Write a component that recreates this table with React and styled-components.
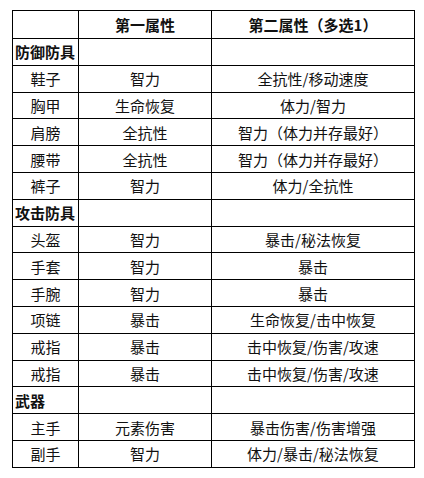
import React from "react"
import styled, { createGlobalStyle } from "styled-components"

const GlobalStyle = createGlobalStyle`
  html, body {
    margin: 0;
    padding: 0;
    background: #ffffff;
  }
  body {
    font-family: "Noto Sans CJK SC", "Liberation Serif", serif;
    color: #111111;
  }
`

const Page = styled.div`
  padding: 10px 0 0 12px;
`

const Table = styled.table`
  border-collapse: collapse;
  table-layout: fixed;
  width: 402px;
  font-size: 15px;
`

const Col = styled.col`
  width: ${(p) => p.$w}px;
`

const HeadCell = styled.th`
  border: 1px solid #000;
  height: 27px;
  padding: 0;
  font-weight: 700;
  text-align: center;
  vertical-align: middle;
  line-height: 1;
`

const Cell = styled.td`
  border: 1px solid #000;
  height: 25.8px;
  padding: ${(p) => (p.$section ? "0 0 0 2px" : "0")};
  font-weight: ${(p) => (p.$section ? 700 : 400)};
  text-align: ${(p) => (p.$section ? "left" : "center")};
  vertical-align: middle;
  line-height: 1;
  white-space: nowrap;
`

const rows = [
  { section: "防御防具" },
  { part: "鞋子", first: "智力", second: "全抗性/移动速度" },
  { part: "胸甲", first: "生命恢复", second: "体力/智力" },
  { part: "肩膀", first: "全抗性", second: "智力（体力并存最好）" },
  { part: "腰带", first: "全抗性", second: "智力（体力并存最好）" },
  { part: "裤子", first: "智力", second: "体力/全抗性" },
  { section: "攻击防具" },
  { part: "头盔", first: "智力", second: "暴击/秘法恢复" },
  { part: "手套", first: "智力", second: "暴击" },
  { part: "手腕", first: "智力", second: "暴击" },
  { part: "项链", first: "暴击", second: "生命恢复/击中恢复" },
  { part: "戒指", first: "暴击", second: "击中恢复/伤害/攻速" },
  { part: "戒指", first: "暴击", second: "击中恢复/伤害/攻速" },
  { section: "武器" },
  { part: "主手", first: "元素伤害", second: "暴击伤害/伤害增强" },
  { part: "副手", first: "智力", second: "体力/暴击/秘法恢复" },
]

const App = () => {
  return <Page>
    <GlobalStyle />
    <Table>
      <colgroup>
        <Col $w={66} />
        <Col $w={133} />
        <Col $w={203} />
      </colgroup>
      <thead>
        <tr>
          <HeadCell></HeadCell>
          <HeadCell>第一属性</HeadCell>
          <HeadCell>第二属性（多选1）</HeadCell>
        </tr>
      </thead>
      <tbody>
        {rows.map((row, index) => row.section
          ? <tr key={index}>
            <Cell $section>{row.section}</Cell>
            <Cell></Cell>
            <Cell></Cell>
          </tr>
          : <tr key={index}>
            <Cell>{row.part}</Cell>
            <Cell>{row.first}</Cell>
            <Cell>{row.second}</Cell>
          </tr>
        )}
      </tbody>
    </Table>
  </Page>
}

export default App
